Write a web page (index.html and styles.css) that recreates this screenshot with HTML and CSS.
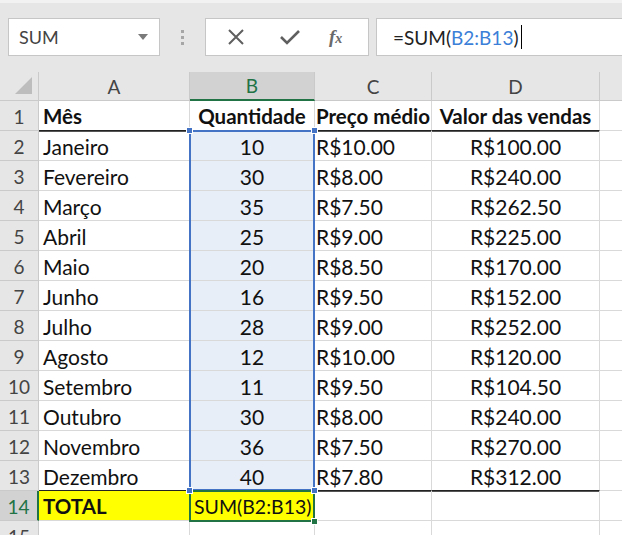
FILE: index.html
```html
<!DOCTYPE html>
<html>
<head>
<meta charset="utf-8">
<link rel="stylesheet" href="styles.css">
</head>
<body>
<div class="toolbar">
  <div class="namebox">
    <span class="name">SUM</span>
    <svg class="caret" width="10" height="6" viewBox="0 0 10 6"><path d="M0 0H10L5 6Z" fill="#7a7a7a"/></svg>
  </div>
  <div class="grip"><i></i><i></i><i></i></div>
  <div class="btnbox">
    <svg class="ico" width="18" height="18" viewBox="0 0 18 18"><path d="M2 2L16 16M16 2L2 16" stroke="#5f5f5f" stroke-width="2"/></svg>
    <svg class="ico" width="22" height="18" viewBox="0 0 22 18"><path d="M2 9L8 15L20 3" stroke="#5f5f5f" stroke-width="2.6" fill="none"/></svg>
    <span class="fx"><span class="f">f</span><span class="x">x</span></span>
  </div>
  <div class="formula"><span>=SUM(</span><span class="ref">B2:B13</span><span>)</span><span class="cursor"></span></div>
</div>
<div class="sheet">
  <div class="grid">
    <div class="corner"><svg width="20" height="18" viewBox="0 0 20 18"><path d="M19 0V17H2Z" fill="#bdbdbd"/></svg></div>
    <div class="ch">A</div><div class="ch sel">B</div><div class="ch">C</div><div class="ch">D</div><div class="ch last"></div>

    <div class="rh">1</div><div class="c b l thick">Mês</div><div class="c b m thick">Quantidade</div><div class="c b l cc thick">Preço médio</div><div class="c b m thick">Valor das vendas</div><div class="c e"></div>

    <div class="rh">2</div><div class="c l">Janeiro</div><div class="c m hi">10</div><div class="c l cc">R$10.00</div><div class="c m">R$100.00</div><div class="c e"></div>
    <div class="rh">3</div><div class="c l">Fevereiro</div><div class="c m hi">30</div><div class="c l cc">R$8.00</div><div class="c m">R$240.00</div><div class="c e"></div>
    <div class="rh">4</div><div class="c l">Março</div><div class="c m hi">35</div><div class="c l cc">R$7.50</div><div class="c m">R$262.50</div><div class="c e"></div>
    <div class="rh">5</div><div class="c l">Abril</div><div class="c m hi">25</div><div class="c l cc">R$9.00</div><div class="c m">R$225.00</div><div class="c e"></div>
    <div class="rh">6</div><div class="c l">Maio</div><div class="c m hi">20</div><div class="c l cc">R$8.50</div><div class="c m">R$170.00</div><div class="c e"></div>
    <div class="rh">7</div><div class="c l">Junho</div><div class="c m hi">16</div><div class="c l cc">R$9.50</div><div class="c m">R$152.00</div><div class="c e"></div>
    <div class="rh">8</div><div class="c l">Julho</div><div class="c m hi">28</div><div class="c l cc">R$9.00</div><div class="c m">R$252.00</div><div class="c e"></div>
    <div class="rh">9</div><div class="c l">Agosto</div><div class="c m hi">12</div><div class="c l cc">R$10.00</div><div class="c m">R$120.00</div><div class="c e"></div>
    <div class="rh">10</div><div class="c l">Setembro</div><div class="c m hi">11</div><div class="c l cc">R$9.50</div><div class="c m">R$104.50</div><div class="c e"></div>
    <div class="rh">11</div><div class="c l">Outubro</div><div class="c m hi">30</div><div class="c l cc">R$8.00</div><div class="c m">R$240.00</div><div class="c e"></div>
    <div class="rh">12</div><div class="c l">Novembro</div><div class="c m hi">36</div><div class="c l cc">R$7.50</div><div class="c m">R$270.00</div><div class="c e"></div>
    <div class="rh">13</div><div class="c l thick">Dezembro</div><div class="c m hi thick">40</div><div class="c l cc thick">R$7.80</div><div class="c m thick">R$312.00</div><div class="c e"></div>

    <div class="rh active">14</div><div class="c l b yellow">TOTAL</div><div class="c l yellow edit">SUM(B2:B13)</div><div class="c"></div><div class="c"></div><div class="c e"></div>
    <div class="rh">15</div><div class="c"></div><div class="c"></div><div class="c"></div><div class="c"></div><div class="c e"></div>
  </div>
  <div class="range"></div>
  <div class="activecell"></div>
  <i class="hd blue h1"></i><i class="hd blue h2"></i><i class="hd blue h3"></i><i class="hd blue h4"></i><i class="hd green h5"></i>
</div>
</body>
</html>
```
FILE: styles.css
```css
* { box-sizing: border-box; }
html, body { margin: 0; padding: 0; width: 622px; height: 535px; overflow: hidden; background: #fff; }
body { font-family: Lato, "Open Sans", sans-serif; }

.toolbar {
  height: 72px;
  background: #e6e6e6;
  border-top: 3px solid #f2f2f2;
  display: flex;
  align-items: flex-start;
  padding: 15px 0 0 8px;
}
.namebox {
  width: 152px; height: 38px;
  background: #fff; border: 1px solid #c6c6c6;
  display: flex; align-items: center; justify-content: space-between;
  padding: 0 11px 0 10px;
}
.name { font-size: 18px; color: #444; }
.grip { width: 45px; height: 38px; display: flex; flex-direction: column; align-items: center; justify-content: center; gap: 3px; }
.grip i { width: 3px; height: 3px; background: #a6a6a6; display: block; }
.btnbox {
  width: 164px; height: 38px;
  background: #fff; border: 1px solid #c6c6c6;
  display: flex; align-items: center;
  padding-left: 21px; gap: 0;
}
.btnbox .ico:nth-child(1) { margin-right: 34px; }
.btnbox .ico:nth-child(2) { margin-right: 28px; }
.fx { font-family: "Liberation Serif", serif; font-style: italic; color: #6a6a6a; font-size: 19px; font-weight: bold; }
.fx .x { font-size: 14px; }
.formula {
  margin-left: 7px; flex: 1; height: 38px;
  background: #fff; border: 1px solid #c6c6c6; border-right: none;
  display: flex; align-items: center;
  padding-left: 16px;
  font-size: 19px; color: #222;
}
.formula .ref { color: #3c7fd8; }
.cursor { width: 1px; height: 24px; background: #000; margin-left: 2px; }

.sheet { position: relative; height: 463px; overflow: hidden; }
.grid {
  display: grid;
  grid-template-columns: 39px 151px 125px 117px 168px 1fr;
  grid-template-rows: 29px repeat(15, 30px);
}
.corner, .ch, .rh {
  background: #e6e6e6;
  border-right: 1px solid #cacaca;
  border-bottom: 1px solid #cacaca;
  color: #444;
  font-size: 19px;
  display: flex; align-items: center; justify-content: center;
}
.corner { justify-content: flex-end; align-items: flex-end; padding: 0 5px 5px 0; }
.ch.sel { background: #d2d2d2; color: #217346; border-bottom: 2px solid #217346; }
.ch.last { border-right: none; }
.rh { padding-top: 1px; }
.rh.active { background: #d2d2d2; color: #217346; border-right: 2px solid #217346; }
.c {
  border-right: 1px solid #d9d9d9;
  border-bottom: 1px solid #d9d9d9;
  font-size: 21px; color: #111;
  display: flex; align-items: center;
  white-space: nowrap; overflow: hidden;
  padding: 1px 4px 0;
}
.c.e { border-right: none; }
.c.l { justify-content: flex-start; }
.c.cc { padding-left: 1px; }
.c.m { justify-content: center; }
.c.b { font-weight: bold; font-size: 20.5px; }
.c.thick { border-bottom: 1px solid #222; box-shadow: 0 1px 0 #555; }
.c.hi { background: #e8eef8; }
.c.yellow { background: #ffff00; }
.c.edit { padding-left: 4px; overflow: visible; font-size: 19.5px; }

.range {
  position: absolute; left: 189px; top: 58px; width: 126px; height: 361px;
  border: 2px solid #4472c4; pointer-events: none;
}
.activecell {
  position: absolute; left: 189px; top: 418px; width: 126px; height: 32px;
  border: 2px solid #217346;
}
.hd { position: absolute; width: 7px; height: 7px; display: block; border: 1px solid #fff; }
.hd.blue { background: #4472c4; }
.hd.green { background: #217346; }
.h1 { left: 186px; top: 55px; }
.h2 { left: 311px; top: 55px; }
.h3 { left: 186px; top: 415px; }
.h4 { left: 311px; top: 415px; }
.h5 { left: 311px; top: 446px; }
```
